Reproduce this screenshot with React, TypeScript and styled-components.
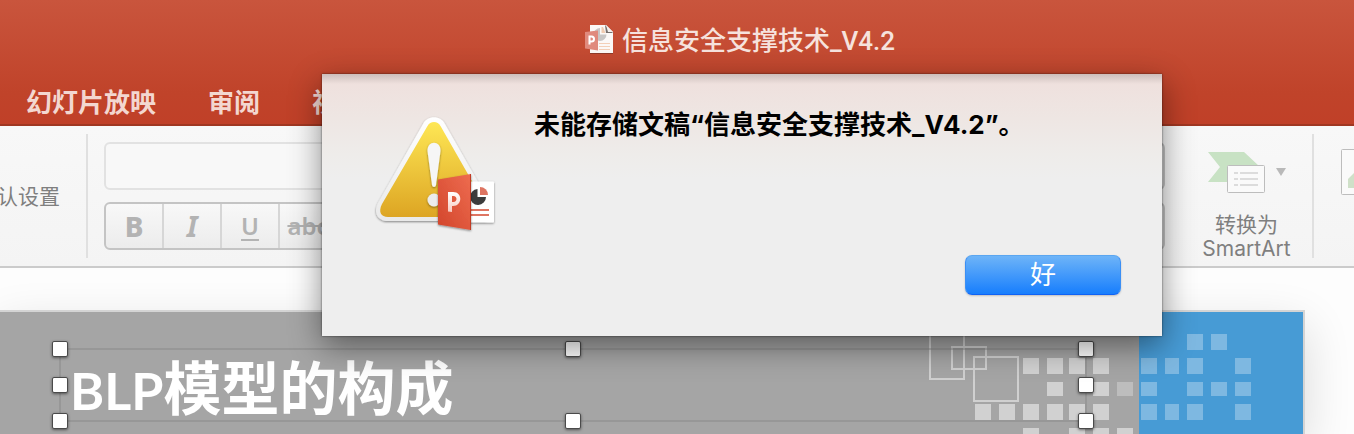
import React from "react";
import styled, { createGlobalStyle, css } from "styled-components";

const latin = `Roboto, "Noto Sans CJK SC", sans-serif`;

const GlobalStyle = createGlobalStyle`
  * { box-sizing: border-box; }
  body {
    margin: 0;
    overflow: hidden;
    font-family: ${latin};
    background: #fdfdfd;
  }
  button, input { font-family: inherit; }
`;

const Window = styled.div`
  position: relative;
  display: flex;
  flex-direction: column;
  min-height: 100vh;
  overflow: hidden;
`;

const Header = styled.header`
  display: flex;
  flex-direction: column;
  background: linear-gradient(#c9553d, #c0432a 75%, #c04028);
  border-bottom: 2px solid #a03722;
`;

const TitleBar = styled.div`
  display: flex;
  align-items: center;
  justify-content: center;
  gap: 8px;
  height: 82px;
  padding-left: 126px;
`;

const DocumentTitle = styled.h1`
  margin: 0;
  font-size: 26px;
  line-height: 32px;
  font-weight: 500;
  color: #f6e2dd;
`;

const Tabs = styled.nav`
  display: flex;
  gap: 52px;
  height: 42px;
  padding-left: 26px;
  white-space: nowrap;
`;

const Tab = styled.a`
  font-size: 26px;
  line-height: 42px;
  font-weight: 700;
  color: #f3d7d0;
  text-decoration: none;
`;

const Ribbon = styled.div`
  display: flex;
  height: 142px;
  background: linear-gradient(#f8f8f8, #f4f4f4);
  border-bottom: 2px solid #cbcbcb;
`;

const Divider = styled.div`
  flex: none;
  width: 2px;
  margin: 8px 0;
  background: #e0e0e0;
`;

const ribbonButton = css`
  border: 0;
  padding: 0;
  background: none;
  color: #7f7f7f;
  font-size: 21px;
  line-height: 24px;
  white-space: nowrap;
`;

const ResetButton = styled.button`
  ${ribbonButton}
  flex: none;
  display: flex;
  justify-content: flex-end;
  align-items: center;
  width: 86px;
  padding: 2px 26px 0 0;
`;

const FontGroup = styled.div`
  flex: 1;
  display: flex;
  flex-direction: column;
  gap: 12px;
  padding: 16px 0 0 16px;
`;

const FontRow = styled.div`
  display: flex;
  justify-content: space-between;
  gap: 16px;
  height: 48px;
`;

const FontInput = styled.input`
  flex: 1;
  border: 2px solid #e2e2e2;
  border-radius: 6px;
  background: #f8f8f8;
`;

const plate = css`
  border: 2px solid #c4c4c4;
  border-radius: 6px;
  background: linear-gradient(#f8f8f8, #ececec);
`;

const PlateButton = styled.button`
  ${plate}
  width: 58px;
`;

const FormatGroup = styled.div`
  ${plate}
  display: flex;
  overflow: hidden;
`;

const FormatButton = styled.button<{ $kind: "bold" | "italic" | "underline" | "strike" }>`
  width: 58px;
  padding: 0;
  border: 0;
  border-right: 2px solid #d6d6d6;
  background: none;
  color: #b3b3b3;
  font-family: "Noto Sans", sans-serif;
  font-size: 24px;
  line-height: 40px;
  ${(p) => p.$kind === "bold" && css`font-size: 28px; font-weight: 800;`}
  ${(p) => p.$kind === "italic" && css`font-size: 28px; font-weight: 700; font-style: italic;`}
  ${(p) => p.$kind === "underline" && css`
    font-weight: 600;
    text-decoration: underline;
    text-decoration-thickness: 2px;
    text-underline-offset: 4px;
  `}
  ${(p) => p.$kind === "strike" && css`
    font-weight: 600;
    text-decoration: line-through;
    text-decoration-thickness: 2px;
  `}
`;

const SmartArtButton = styled.button`
  ${ribbonButton}
  flex: none;
  display: flex;
  flex-direction: column;
  align-items: center;
  gap: 19px;
  width: 147px;
  padding: 26px 0 0 16px;
`;

const SmartArtLabel = styled.span`
  font-family: Inter, "Noto Sans CJK SC", sans-serif;
`;

const PictureButton = styled.button`
  ${ribbonButton}
  flex: none;
  display: flex;
  align-items: flex-start;
  width: 40px;
  padding: 22px 0 0 27px;
  overflow: hidden;
  svg { flex: none; }
`;

const Workspace = styled.main`
  flex: 1;
  display: flex;
  padding: 42px 49px 0 0;
  background: #fdfdfd;
  overflow: hidden;
`;

const Slide = styled.section`
  position: relative;
  flex: 1;
  border: 2px solid #d4d4d4;
  border-width: 2px 2px 0 0;
  background: linear-gradient(to left, #479bd5 164px, #a5a5a5 164px);
  box-shadow: 0 16px 48px rgba(0, 0, 0, 0.14);
`;

const SlideArt = styled.svg`
  position: absolute;
  top: 0;
  right: 0;
`;

const TitleBox = styled.div`
  position: relative;
  display: flex;
  align-items: flex-end;
  height: 72px;
  margin: 37px 217px 0 60px;
  padding-left: 10px;
  outline: 2px solid rgba(130, 130, 130, 0.4);
  outline-offset: -1px;
`;

const SlideTitle = styled.h2`
  margin: 0;
  font-family: Lato, "Noto Sans CJK SC", sans-serif;
  font-size: 58px;
  line-height: 62px;
  font-weight: 700;
  color: #fff;
  white-space: nowrap;
`;

const SlideTitleLatin = styled.span`
  font-size: 52px;
`;

const Handle = styled.i<{ $x: number; $y: number }>`
  position: absolute;
  left: ${(p) => p.$x}%;
  top: ${(p) => p.$y}%;
  width: 16px;
  height: 16px;
  margin: -8px 0 0 -8px;
  border: 1px solid #4a4a4a;
  border-radius: 2px;
  background: #fff;
  box-shadow: 0 1px 3px rgba(0, 0, 0, 0.5);
`;

const SheetLayer = styled.div`
  position: absolute;
  inset: 74px 0 auto 0;
  display: flex;
  justify-content: center;
  padding-left: 130px;
`;

const Sheet = styled.div`
  display: grid;
  grid-template-columns: 128px 1fr;
  column-gap: 36px;
  width: 840px;
  padding: 34px 41px 41px 48px;
  background:
    linear-gradient(rgba(0, 0, 0, 0.15), rgba(0, 0, 0, 0) 10px),
    linear-gradient(#efdfdc, #eee6e3 44px, #eeecea 80px, #eeeeee 105px);
  box-shadow: 0 0 2px rgba(0, 0, 0, 0.6), 0 10px 30px rgba(0, 0, 0, 0.45);
`;

const Message = styled.p`
  margin: 0;
  font-family: Inter, "Noto Sans CJK SC", sans-serif;
  font-size: 26px;
  line-height: 34px;
  font-weight: 700;
  color: #000;
  white-space: nowrap;
`;

const Actions = styled.div`
  grid-column: 1 / -1;
  display: flex;
  justify-content: flex-end;
  padding-top: 19px;
`;

const OkButton = styled.button`
  width: 156px;
  height: 40px;
  padding: 0;
  border: 1px solid;
  border-color: #5ba6f0 #3b8ff5 #0f62f5;
  border-radius: 7px;
  background: linear-gradient(#6eb4f8, #177efd);
  box-shadow: 0 1px 2px rgba(0, 0, 0, 0.2);
  color: #fff;
  font-size: 26px;
  line-height: 38px;
`;

function DocumentIcon() {
  return (
    <svg width="29" height="32" viewBox="0 0 29 32" aria-hidden="true">
      <path d="M5 0H21L28 7V28H5Z" fill="#fbf8f7" />
      <path d="M5 28.500H28" stroke="#8f3a2a" />
      <path d="M15 3A6.500 6.500 0 1 0 21.500 9.500H15Z" fill="#c9c6c5" />
      <path d="M16.500 2H18L20.500 8H16.500Z" fill="#f0cbb2" />
      <path d="M20 0L28 8H21Z" fill="#77706e" />
      <path d="M21 0L28 7H23Z" fill="#f3efee" />
      <path d="M14 18.500H25M14 21.500H25M14 24.500H25" stroke="#f3cfb8" />
      <path d="M0 7L13 5.500V25.500L0 23.500Z" fill="#e08a7d" />
      <path d="M4.500 19.500V11.500H6.500A2.500 2.500 0 0 1 6.500 16.500H4.500" fill="none" stroke="#fff" strokeWidth="2" />
    </svg>
  );
}

function AlertIcon() {
  return (
    <svg width="128" height="128" viewBox="0 -2 128 128" aria-hidden="true">
      <defs>
        <linearGradient id="yellow" x1="0" y1="0" x2="0" y2="1">
          <stop offset="0" stopColor="#fee755" />
          <stop offset="1" stopColor="#dda523" />
        </linearGradient>
        <linearGradient id="rim" x1="0" y1="0" x2="0" y2="1">
          <stop offset="0" stopColor="#ffffff" />
          <stop offset="1" stopColor="#e9e9e9" />
        </linearGradient>
        <linearGradient id="cover" x1="0" y1="1" x2="1" y2="0">
          <stop offset="0" stopColor="#d2452b" />
          <stop offset="1" stopColor="#ee6c50" />
        </linearGradient>
        <linearGradient id="letter" x1="0" y1="0" x2="0" y2="1">
          <stop offset="0" stopColor="#ffffff" />
          <stop offset="1" stopColor="#f8c9be" />
        </linearGradient>
        <filter id="soft" x="-20%" y="-20%" width="140%" height="140%">
          <feDropShadow dx="0" dy="1" stdDeviation="1.200" floodOpacity="0.45" />
        </filter>
      </defs>
      <path
        d="M53 14C57 5 71 5 75 14L120 93C125 103 121 111 112 111H18C8 111 3 103 8 93Z"
        fill="url(#rim)"
        filter="url(#soft)"
      />
      <path
        d="M57.500 16C60 10.500 68 10.500 70.500 16L115 94C118 101 116 107 109 107H18C11 107 8 102 12 94Z"
        fill="url(#yellow)"
      />
      <g filter="url(#soft)">
        <path d="M57.500 41C57 30 71 30 70.500 41L66 75C65.500 77.500 62.500 77.500 62 75Z" fill="#f6f6f6" />
        <circle cx="64" cy="90" r="6.500" fill="#ececec" />
      </g>
      <g filter="url(#soft)">
        <rect x="98" y="71.500" width="26" height="41" rx="1" fill="#fff" />
      </g>
      <path d="M107.500 79A8 8 0 1 0 116 87H107.500Z" fill="#3c3c3c" />
      <path d="M110 77A8 8 0 0 1 118 85H110Z" fill="#de7562" />
      <path d="M101 100H119M101 105H119" stroke="#de7562" strokeWidth="2" />
      <path d="M68 69.500L101 64V120L68 114.500Z" fill="url(#cover)" filter="url(#soft)" />
      <path d="M100.500 64V120" stroke="#c23c24" />
      <path
        d="M78 82H83C93 82 92.500 96 83 96H82V102L78 101.500ZM82 86V92H83.500C87.500 92 87.500 86 83.500 86Z"
        fill="url(#letter)"
        fillRule="evenodd"
      />
    </svg>
  );
}

function SmartArtIcon() {
  return (
    <svg width="78" height="42" viewBox="0 0 78 42" aria-hidden="true">
      <path d="M0 0H36L51 14V30H0L12 15Z" fill="#c8e2c4" />
      <rect x="19.500" y="13.500" width="37" height="27" rx="1" fill="#fafafa" stroke="#bdbdbd" />
      <path d="M26 21H30M26 27H30M26 33H30M32 21H50M32 27H50M32 33H50" stroke="#dcdcdc" strokeWidth="2" />
      <path d="M68 16H78L73 24Z" fill="#b9b9b9" />
    </svg>
  );
}

function PictureIcon() {
  return (
    <svg width="60" height="48" viewBox="0 0 60 48" aria-hidden="true">
      <rect x="0.500" y="1.500" width="56" height="45" rx="1" fill="#fafafa" stroke="#bdbdbd" />
      <path d="M7 40V31L18 20L36 40Z" fill="#cfe0c8" />
    </svg>
  );
}

/* Grey tiles are [column, y, height]; blue tiles are [x, y, width, height]. */
const grey = "#d1d1d1";
const columns = [55, 79, 103, 127, 149, 173, 197];
const greyTiles: [number, number, number][] = [
  [2, 46, 16], [3, 46, 16], [4, 46, 16], [5, 46, 16],
  [3, 70, 14], [5, 70, 14],
  [0, 92, 16], [1, 92, 16], [2, 92, 16], [3, 92, 16], [4, 92, 16], [5, 92, 16],
  [2, 116, 16], [4, 116, 16], [5, 116, 16], [6, 116, 16],
];
const blueTiles: [number, number, number, number][] = [
  [267, 22, 16, 16], [291, 22, 16, 16],
  [221, 46, 16, 16], [245, 46, 14, 16], [267, 46, 16, 16], [315, 46, 16, 16],
  [221, 70, 16, 14], [267, 70, 16, 14], [291, 70, 16, 14], [315, 70, 16, 14],
  [221, 92, 16, 16], [245, 92, 14, 16], [267, 92, 16, 16], [315, 92, 16, 16],
];

function Mosaic() {
  return (
    <SlideArt width="383" height="132" viewBox="0 0 383 132" aria-hidden="true">
      <g fill="none" stroke="#d0d0d0" strokeWidth="2">
        <rect x="10" y="20" width="34" height="47" />
        <rect x="32" y="35" width="34" height="22" />
        <rect x="54" y="45" width="44" height="44" />
      </g>
      {greyTiles.map(([c, y, h]) => (
        <rect key={`${c}-${y}`} x={columns[c]} y={y} width="16" height={h} fill={grey} />
      ))}
      <rect x="197" y="70" width="16" height="14" fill="#bdbdbd" />
      {blueTiles.map(([x, y, w, h]) => (
        <rect key={`${x}-${y}`} x={x} y={y} width={w} height={h} fill="#7eb8e1" />
      ))}
    </SlideArt>
  );
}

const handles = [
  [0, 0], [50, 0], [100, 0],
  [0, 50], [100, 50],
  [0, 100], [50, 100], [100, 100],
];

export default function App() {
  return (
    <>
      <GlobalStyle />
      <Window>
        <Header>
          <TitleBar>
            <DocumentIcon />
            <DocumentTitle>信息安全支撑技术_V4.2</DocumentTitle>
          </TitleBar>
          <Tabs>
            <Tab href="#slideshow">幻灯片放映</Tab>
            <Tab href="#review">审阅</Tab>
            <Tab href="#view">视图</Tab>
          </Tabs>
        </Header>
        <Ribbon>
          <ResetButton>默认设置</ResetButton>
          <Divider />
          <FontGroup>
            <FontRow>
              <FontInput aria-label="字体" />
              <PlateButton aria-label="清除格式" />
            </FontRow>
            <FontRow>
              <FormatGroup>
                <FormatButton $kind="bold">B</FormatButton>
                <FormatButton $kind="italic">I</FormatButton>
                <FormatButton $kind="underline">U</FormatButton>
                <FormatButton $kind="strike">abc</FormatButton>
              </FormatGroup>
              <PlateButton aria-label="字体颜色" />
            </FontRow>
          </FontGroup>
          <SmartArtButton>
            <SmartArtIcon />
            <SmartArtLabel>
              转换为
              <br />
              SmartArt
            </SmartArtLabel>
          </SmartArtButton>
          <Divider />
          <PictureButton aria-label="图片">
            <PictureIcon />
          </PictureButton>
        </Ribbon>
        <Workspace>
          <Slide>
            <Mosaic />
            <TitleBox>
              <SlideTitle>
                <SlideTitleLatin>BLP</SlideTitleLatin>模型的构成
              </SlideTitle>
              {handles.map(([x, y]) => (
                <Handle key={`${x}-${y}`} $x={x} $y={y} />
              ))}
            </TitleBox>
          </Slide>
        </Workspace>
        <SheetLayer>
          <Sheet role="alertdialog" aria-labelledby="message">
            <AlertIcon />
            <Message id="message">未能存储文稿“信息安全支撑技术_V4.2”。</Message>
            <Actions>
              <OkButton>好</OkButton>
            </Actions>
          </Sheet>
        </SheetLayer>
      </Window>
    </>
  );
}
